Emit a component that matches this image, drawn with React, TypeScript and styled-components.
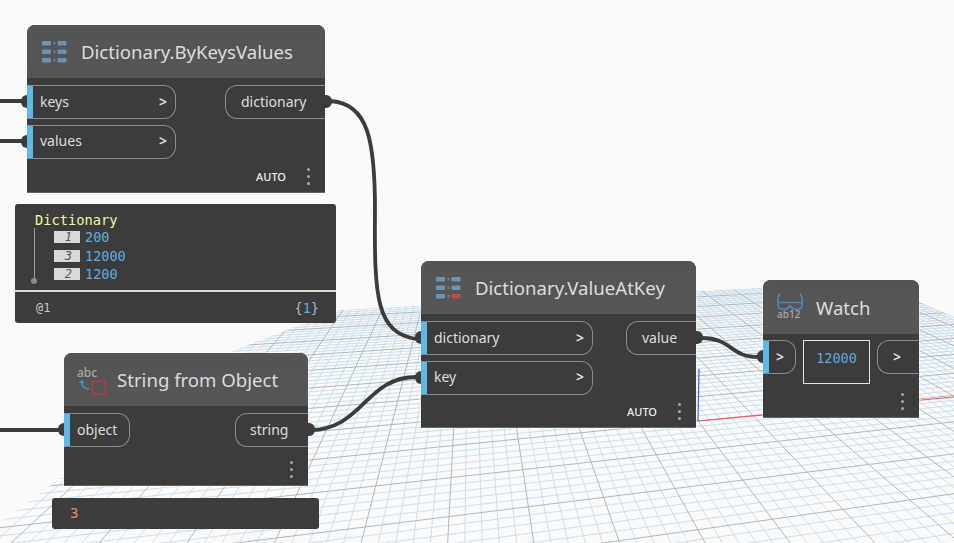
import React from "react";
import styled, { createGlobalStyle } from "styled-components";

const Global = createGlobalStyle`
  html, body { margin: 0; padding: 0; background: #fafafa; }
  #root { width: 954px; height: 543px; }
`;

const UI = `"Noto Sans", "Open Sans", sans-serif`;
const MONO = `"DejaVu Sans Mono", "Liberation Mono", monospace`;

const Canvas = styled.div`
  position: relative;
  width: 954px;
  height: 543px;
  overflow: hidden;
  background: #fafafa;
  font-family: ${UI};
`;

const Layer = styled.svg`
  position: absolute;
  left: 0;
  top: 0;
`;

const Node = styled.section<{ $x: number; $y: number; $w: number; $h: number }>`
  position: absolute;
  left: ${(p) => p.$x}px;
  top: ${(p) => p.$y}px;
  width: ${(p) => p.$w}px;
  height: ${(p) => p.$h}px;
  box-sizing: border-box;
  display: flex;
  flex-direction: column;
  background: #3c3c3c;
  border-bottom: 1px solid #666;
  border-radius: 8px 8px 0 0;
  box-shadow: 0 0 3px rgba(255, 255, 255, 0.9);
`;

const Header = styled.header<{ $h: number; $pad: number; $gap: number }>`
  height: ${(p) => p.$h}px;
  flex: none;
  box-sizing: border-box;
  display: flex;
  align-items: center;
  gap: ${(p) => p.$gap}px;
  padding-left: ${(p) => p.$pad}px;
  background: linear-gradient(#545454, #565656);
  border-radius: 8px 8px 0 0;
`;

const Title = styled.h2`
  margin: 0;
  font-size: 18.6px;
  font-weight: 400;
  color: #dcdcdc;
  white-space: nowrap;
`;

const Body = styled.div`
  display: flex;
  justify-content: space-between;
  align-items: flex-start;
  padding-top: 7px;
`;

const Column = styled.div`
  display: flex;
  flex-direction: column;
  gap: 5.5px;
`;

const PortRow = styled.div<{ $w: number }>`
  position: relative;
  width: ${(p) => p.$w}px;
  flex: none;
`;

const Knob = styled.span<{ $side: "left" | "right" }>`
  position: absolute;
  top: 10px;
  ${(p) => (p.$side === "left" ? "left: -6px;" : "right: -7px;")}
  width: ${(p) => (p.$side === "left" ? 6 : 7)}px;
  height: 13px;
  background: #3c3c3c;
  border-radius: ${(p) => (p.$side === "left" ? "6px 0 0 6px" : "0 6px 6px 0")};
`;

const Port = styled.div<{ $dir: "in" | "out"; $inset: number }>`
  height: 34px;
  box-sizing: border-box;
  display: flex;
  align-items: center;
  justify-content: space-between;
  font-size: 14px;
  color: #dcdcdc;
  white-space: nowrap;
  border: 1px solid #8c8c8c;
  ${(p) =>
    p.$dir === "in"
      ? `border-left: 6px solid #60b8e6; border-radius: 0 12px 12px 0; padding: 0 8px 2px ${p.$inset}px;`
      : `border-right: none; border-radius: 12px 0 0 12px; padding: 0 0 2px ${p.$inset}px;`}
`;

const Chevron = styled.span`
  font-size: 14px;
  font-weight: 600;
  color: #e2e2e2;
`;

const Footer = styled.footer<{ $right: number }>`
  margin-top: auto;
  height: 32px;
  display: flex;
  justify-content: flex-end;
  align-items: center;
  gap: 21px;
  padding-right: ${(p) => p.$right}px;
`;

const Auto = styled.span`
  font-size: 11px;
  color: #eeeeee;
  font-weight: 500;
`;

const Dots = styled.span`
  display: flex;
  flex-direction: column;
  gap: 4px;
  i {
    width: 3px;
    height: 3px;
    border-radius: 50%;
    background: #a8a8a8;
  }
`;

const WatchBox = styled.div`
  width: 67px;
  height: 44px;
  box-sizing: border-box;
  display: flex;
  align-items: center;
  justify-content: center;
  padding-bottom: 9px;
  border: 1px solid #e4e4e4;
  font-family: ${MONO};
  font-size: 13.5px;
  color: #5fa8dc;
`;

const WatchRow = styled.div`
  display: flex;
  align-items: flex-start;
  gap: 7px;
  padding-top: 6px;
`;

const Preview = styled.aside<{ $x: number; $y: number; $w: number; $h: number }>`
  position: absolute;
  left: ${(p) => p.$x}px;
  top: ${(p) => p.$y}px;
  width: ${(p) => p.$w}px;
  height: ${(p) => p.$h}px;
  box-sizing: border-box;
  display: flex;
  flex-direction: column;
  background: #3c3c3c;
  border-radius: 3px;
  font-family: ${MONO};
  font-size: 13.7px;
`;

const Tree = styled.div`
  position: relative;
  height: 88px;
  flex: none;
  box-sizing: border-box;
  padding: 8px 0 0 20px;
  border-bottom: 2px solid #d8d8d8;
`;

const TreeLabel = styled.div`
  height: 16px;
  line-height: 16px;
  color: #f3f3a8;
`;

const Rail = styled.span`
  position: absolute;
  left: 19px;
  top: 24px;
  bottom: 9px;
  width: 1px;
  background: #9a9a9a;
  &::after {
    content: "";
    position: absolute;
    left: -3px;
    bottom: -3px;
    width: 6px;
    height: 6px;
    border-radius: 50%;
    background: #8c8c8c;
  }
`;

const Rows = styled.div`
  display: flex;
  flex-direction: column;
  gap: 6.5px;
  padding: 3px 0 0 19px;
`;

const Row = styled.div`
  height: 12px;
  display: flex;
  align-items: center;
  gap: 5px;
  color: #5cade0;
  font-size: 13.5px;
`;

const Chip = styled.span`
  width: 26px;
  height: 12px;
  box-sizing: border-box;
  padding-right: 8px;
  background: #d9d9d9;
  color: #555;
  font-size: 12px;
  line-height: 12px;
  font-style: italic;
  text-align: right;
`;

const Status = styled.div`
  flex: 1;
  display: flex;
  justify-content: space-between;
  align-items: center;
  padding: 0 17px 0 21px;
  color: #c8c8c8;
  font-size: 12px;
`;

const Level = styled.span`
  font-size: 13.5px;
  color: #a9b9c4;
  b {
    font-weight: 400;
    color: #5cade0;
  }
`;

const Single = styled.div`
  padding: 7px 0 0 18px;
  font-size: 14px;
  color: #e0925a;
`;

/* ---------- ground grid: a homography built from two vanishing points ---------- */
const VP1 = [3400, 150];
const VP2 = [470, 120];
const O = [698, 421];
const A = 0.0208;
const B = 0.082;
const project = (u: number, v: number) => {
  const w = A * u + B * v + 1;
  return [
    (A * u * VP1[0] + B * v * VP2[0] + O[0]) / w,
    (A * u * VP1[1] + B * v * VP2[1] + O[1]) / w,
  ];
};

const gridLines = () => {
  const minor: string[] = [];
  const major: string[] = [];
  const seg = (a: number[], b: number[]) =>
    `M${a[0].toFixed(1)} ${a[1].toFixed(1)}L${b[0].toFixed(1)} ${b[1].toFixed(1)}`;
  for (let i = -75; i <= 60; i++) {
    const u = i / 5;
    (i % 5 === 0 ? major : minor).push(seg(project(u, 10), project(u, -6)));
  }
  for (let i = -30; i <= 50; i++) {
    const v = i / 5;
    (i % 5 === 0 ? major : minor).push(seg(project(-15, v), project(12, v)));
  }
  return { minor: minor.join(""), major: major.join("") };
};

const Ground = () => {
  const { minor, major } = gridLines();
  return (
    <Layer width={954} height={543}>
      <defs>
        <clipPath id="floor">
          <polygon points="0,523 230,352 340,310 873,282 954,317 954,543 0,543" />
        </clipPath>
      </defs>
      <g clipPath="url(#floor)" fill="none">
        <path d={minor} stroke="#c6dcec" strokeWidth={0.9} />
        <path d={major} stroke="#afb9c0" strokeWidth={1} />
      </g>
      <path d="M698 421L954 397" stroke="#f0545c" strokeWidth={1.2} fill="none" />
      <path d="M698 421L699 369" stroke="#4a55e0" strokeWidth={1.2} fill="none" />
    </Layer>
  );
};

const Wires = () => (
  <Layer width={954} height={543}>
    <g fill="none" stroke="#3c3c3c" strokeWidth={3.8} strokeLinecap="round">
      <path d="M-2 101H22" />
      <path d="M-2 141H22" />
      <path d="M-2 430H59" />
      <path d="M330 101C368 103 375 140 375 210C374 300 377 332 416 339" />
      <path d="M310 430C362 430 366 377 416 377" />
      <path d="M701 338C732 338 730 357 758 357" />
    </g>
  </Layer>
);

/* ---------- node icons ---------- */
const DictIcon = ({ alert }: { alert?: boolean }) => (
  <svg width={26} height={24} viewBox="0 0 26 24">
    {[1, 9.5, 18].map((y, i) => (
      <g key={y}>
        <rect x={1} y={y} width={9} height={4.5} rx={1} fill="#6a93b8" />
        <rect x={12.6} y={y + 1} width={1.8} height={2.5} fill="#7d7d7d" />
        <rect x={16.5} y={y} width={9} height={4.5} rx={1} fill={alert && i === 2 ? "#c8484a" : "#6a93b8"} />
      </g>
    ))}
  </svg>
);

const IconText = styled.text<{ $size: number }>`
  font-family: ${UI};
  font-size: ${(p) => p.$size}px;
  font-weight: 500;
  fill: #a8a8a8;
`;

const StringIcon = () => (
  <svg width={30} height={32} viewBox="0 0 30 32">
    <IconText $size={12} x={0} y={13}>abc</IconText>
    <path d="M5 16.5V20Q5.5 24 12 25" fill="none" stroke="#4f90c8" strokeWidth={1.7} />
    <path d="M2.5 19L5 15.5L7.5 19Z" fill="#4f90c8" />
    <rect x={15.5} y={17.5} width={12.5} height={12.5} fill="none" stroke="#b83c3c" strokeWidth={1.3} />
  </svg>
);

const WatchIcon = () => (
  <svg width={26} height={32} viewBox="0 0 26 32">
    <path
      d="M3 2.5Q0 6 1 12V14.5Q1 18 5 18H9Q11 18 13 14.5Q15 18 17 18H21Q25 18 25 14.5V12Q26 6 23 2.5M1 11.5H25"
      fill="none"
      stroke="#4f85b4"
      strokeWidth={1.7}
    />
    <IconText $size={10} x={0} y={27}>ab12</IconText>
  </svg>
);

const Menu = () => (
  <Dots>
    <i />
    <i />
    <i />
  </Dots>
);

const InPort = ({ w, label, chevron = true, knob = true }: { w: number; label?: string; chevron?: boolean; knob?: boolean }) => (
  <PortRow $w={w}>
    {knob && <Knob $side="left" />}
    <Port $dir="in" $inset={7}>
      {label && <span>{label}</span>}
      {chevron && <Chevron>&gt;</Chevron>}
    </Port>
  </PortRow>
);

const OutPort = ({ w, inset, label, knob = true }: { w: number; inset: number; label: React.ReactNode; knob?: boolean }) => (
  <PortRow $w={w}>
    {knob && <Knob $side="right" />}
    <Port $dir="out" $inset={inset}>
      {label}
    </Port>
  </PortRow>
);

export default function App() {
  return (
    <Canvas>
      <Global />
      <Ground />
      <Wires />

      <Node $x={27} $y={25} $w={298} $h={168}>
        <Header $h={53} $pad={14} $gap={14}>
          <DictIcon />
          <Title>Dictionary.ByKeysValues</Title>
        </Header>
        <Body>
          <Column>
            <InPort w={149} label="keys" />
            <InPort w={149} label="values" />
          </Column>
          <OutPort w={100} inset={15} label="dictionary" />
        </Body>
        <Footer $right={15}>
          <Auto>AUTO</Auto>
          <Menu />
        </Footer>
      </Node>

      <Preview $x={15} $y={204} $w={321} $h={119}>
        <Tree>
          <TreeLabel>Dictionary</TreeLabel>
          <Rail />
          <Rows>
            <Row><Chip>1</Chip>200</Row>
            <Row><Chip>3</Chip>12000</Row>
            <Row><Chip>2</Chip>1200</Row>
          </Rows>
        </Tree>
        <Status>
          <span>@1</span>
          <Level>{"{"}<b>1</b>{"}"}</Level>
        </Status>
      </Preview>

      <Node $x={421} $y={261} $w={275} $h={167}>
        <Header $h={53} $pad={14} $gap={14}>
          <DictIcon alert />
          <Title>Dictionary.ValueAtKey</Title>
        </Header>
        <Body>
          <Column>
            <InPort w={172} label="dictionary" />
            <InPort w={172} label="key" />
          </Column>
          <OutPort w={70} inset={15} label="value" />
        </Body>
        <Footer $right={15}>
          <Auto>AUTO</Auto>
          <Menu />
        </Footer>
      </Node>

      <Node $x={64} $y={353} $w={244} $h={133}>
        <Header $h={53} $pad={13} $gap={10}>
          <StringIcon />
          <Title>String from Object</Title>
        </Header>
        <Body>
          <Column>
            <InPort w={66} label="object" chevron={false} />
          </Column>
          <OutPort w={73} inset={14} label="string" />
        </Body>
        <Footer $right={15}>
          <Menu />
        </Footer>
      </Node>

      <Preview $x={52} $y={498} $w={267} $h={31}>
        <Single>3</Single>
      </Preview>

      <Node $x={763} $y={280} $w={156} $h={138}>
        <Header $h={54} $pad={14} $gap={13}>
          <WatchIcon />
          <Title>Watch</Title>
        </Header>
        <WatchRow>
          <InPort w={33} />
          <WatchBox>12000</WatchBox>
          <OutPort w={42} inset={15} knob={false} label={<Chevron>&gt;</Chevron>} />
        </WatchRow>
        <Footer $right={15}>
          <Menu />
        </Footer>
      </Node>
    </Canvas>
  );
}
